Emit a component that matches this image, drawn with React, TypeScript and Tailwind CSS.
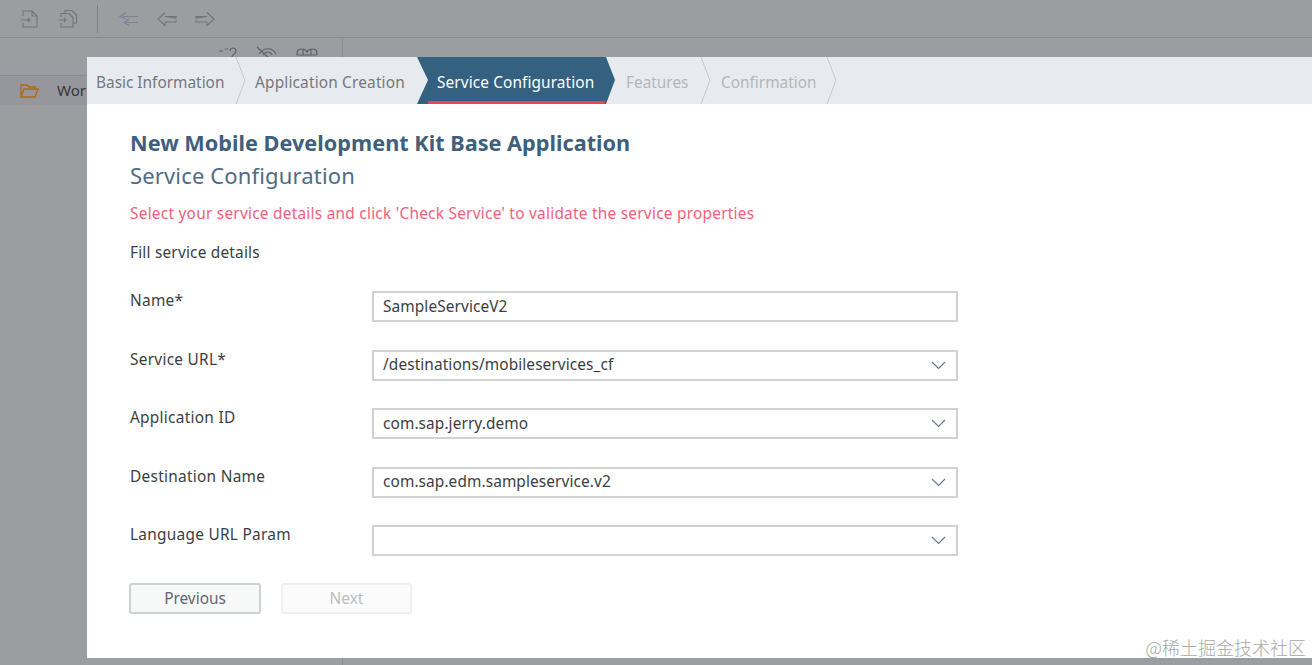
const FIELDS = [
  { label: 'Name*', value: 'SampleServiceV2', select: false },
  { label: 'Service URL*', value: '/destinations/mobileservices_cf', select: true },
  { label: 'Application ID', value: 'com.sap.jerry.demo', select: true },
  { label: 'Destination Name', value: 'com.sap.edm.sampleservice.v2', select: true },
  { label: 'Language URL Param', value: '', select: true },
];

function StepDivider() {
  return (
    <svg className="w-[11px] h-[47px] shrink-0" viewBox="0 0 11 47" fill="none" stroke="#c4c7cb" strokeWidth="1">
      <path d="M1 0 L10 23.5 L1 47" />
    </svg>
  );
}

function ToolbarIcons() {
  return (
    <div className="flex items-center h-[37px] pl-[20px] text-[#6f7479]">
      <svg className="w-[20px] h-[20px]" viewBox="0 0 20 20" fill="none" stroke="currentColor" strokeWidth="1.1">
        <path d="M3 7 V2 H12 L17 7 V18 H3 V14" />
        <path d="M12 2 V7 H17" />
        <path d="M1 11 H10 M8 9 L10 11 L8 13" />
      </svg>
      <svg className="w-[20px] h-[20px] ml-[18px]" viewBox="0 0 20 20" fill="none" stroke="currentColor" strokeWidth="1.1">
        <path d="M7 4 V1.5 H14 L18.5 6 V14 H15" />
        <path d="M3 8 V4.5 H11 L15 8.5 V18 H3 V14" />
        <path d="M0.5 11 H8 M6 9 L8 11 L6 13" />
      </svg>
      <div className="w-px h-[28px] bg-[#7d8084] ml-[19px]" />
      <svg className="w-[21px] h-[16px] ml-[20px] text-[#837f92]" viewBox="0 0 21 16" fill="none" stroke="currentColor" strokeWidth="1.1">
        <path d="M8 1.5 L2 5.5 L8 7.5 M5 5.5 H20 M11 8 L6 11.5 L11 14.5 M8 11.5 H20" />
      </svg>
      <svg className="w-[20px] h-[16px] ml-[18px]" viewBox="0 0 20 16" fill="none" stroke="currentColor" strokeWidth="1.1">
        <path d="M8 1.5 L1 8 L8 14.5 V11 H19 V9 M19 7 V5.5 H8 Z" />
      </svg>
      <svg className="w-[20px] h-[16px] ml-[18px]" viewBox="0 0 20 16" fill="none" stroke="currentColor" strokeWidth="1.1">
        <path d="M12 1.5 L19 8 L12 14.5 V11 H1 V9 M1 7 V5.5 H12 Z" />
      </svg>
    </div>
  );
}

function PaneIcons() {
  return (
    <div className="flex justify-end items-start pt-[8px] pr-[24px] h-[37px] gap-[18px] text-[#5f6368]">
      <svg className="w-[20px] h-[20px]" viewBox="0 0 20 20" fill="none" stroke="currentColor" strokeWidth="1.2">
        <path d="M1 5 H5 M7 3 H10 M12 5 C12 1 18 1 18 5 C18 8 14 8 14 11" />
      </svg>
      <svg className="w-[22px] h-[20px]" viewBox="0 0 22 20" fill="none" stroke="currentColor" strokeWidth="1.2">
        <path d="M1 1 L12 11 M3 8 C8 1 16 1 20 8 M7 9 C10 5 14 5 16 9" />
      </svg>
      <svg className="w-[22px] h-[20px]" viewBox="0 0 22 20" fill="none" stroke="currentColor" strokeWidth="1.2">
        <path d="M1 9 C1 3 3 3 6 3 C9 3 10 4 11 6 C12 4 13 3 16 3 C19 3 21 3 21 9 M1 9 H21 M7 3 V9 M15 3 V9" />
      </svg>
    </div>
  );
}

function Field({ label, value, select }: { label: string; value: string; select: boolean }) {
  return (
    <div className="flex items-start h-[31px]">
      <div className="w-[242px] pt-[1px] text-[15.4px] leading-[18px] tracking-[0.28px] text-[#3a3e42]">{label}</div>
      <div className="w-[586px] h-[31px] flex items-center justify-between border-2 border-[#d2d2d2] pl-[9px] pr-[10px] text-[15.4px] tracking-[0.1px] text-[#3a3e42] bg-white">
        <span>{value}</span>
        {select && (
          <svg className="w-[15px] h-[9px] text-[#6a7690]" viewBox="0 0 15 9" fill="none" stroke="currentColor" strokeWidth="1.2">
            <path d="M1 1 L7.5 7.5 L14 1" />
          </svg>
        )}
      </div>
    </div>
  );
}

export default function App() {
  return (
    <div className="relative w-[1312px] h-[665px] overflow-hidden bg-[#9c9da1] font-['Noto_Sans',sans-serif]">

      {/* Dimmed IDE behind the wizard */}
      <div className="border-b border-[#8b8c90]">
        <ToolbarIcons />
      </div>
      <div className="w-[343px] h-[627px] border-r border-[#8b8c90]">
        <div className="border-b border-[#8b8c90]">
          <PaneIcons />
        </div>
        <div className="flex items-center h-[29px] bg-[#95979c] pl-[19px]">
          <svg className="w-[20px] h-[16px]" viewBox="0 0 20 16" fill="none" stroke="#b0690f" strokeWidth="1.3">
            <path d="M2 14 V2 H8 L10 4 H16 V6 M2 14 L5 6 H19 L16 14 Z" />
          </svg>
          <span className="ml-[18px] w-[30px] overflow-hidden whitespace-nowrap text-[15px] text-[#34363a]">Workspace</span>
        </div>
      </div>

      {/* Wizard dialog */}
      <div className="absolute left-[87px] top-[57px] w-[1225px] h-[601px] bg-white">
        <div className="flex items-center h-[47px] pl-[9px] bg-[#e7ebf0] text-[15.4px] whitespace-nowrap">
          <span className="w-[128px] pt-[4px] text-[#74777a]">Basic Information</span>
          <div className="ml-[11px]"><StepDivider /></div>
          <span className="ml-[9px] w-[151px] pt-[4px] tracking-[0.17px] text-[#74777a]">Application Creation</span>
          <div className="relative ml-[11px] w-[198px] h-[47px] flex items-center pl-[20px] pt-[4px] tracking-[0.1px] bg-[#33617f] text-white [clip-path:polygon(0_0,189px_0,198px_23px,189px_47px,0_47px,11px_23px)]">
            Service Configuration
            <div className="absolute left-[11px] bottom-0 w-[177px] h-[3px] bg-[#f0405a]" />
          </div>
          <span className="ml-[11px] w-[64px] pt-[4px] text-[#b4b6b8]">Features</span>
          <div className="ml-[10px]"><StepDivider /></div>
          <span className="ml-[10px] w-[95px] pt-[4px] text-[#b4b6b8]">Confirmation</span>
          <div className="ml-[10px]"><StepDivider /></div>
        </div>

        <div className="pl-[43px] pt-[24px]">
          <h1 className="text-[21.7px] leading-[30px] font-bold text-[#3f5f7c]">New Mobile Development Kit Base Application</h1>
          <h2 className="mt-[2px] text-[22px] leading-[30px] tracking-[0.15px] text-[#4f6b86]">Service Configuration</h2>
          <p className="mt-[14px] text-[15.4px] leading-[20px] tracking-[0.25px] text-[#f4607a]">
            Select your service details and click 'Check Service' to validate the service properties
          </p>
          <p className="mt-[19px] text-[15.4px] leading-[20px] tracking-[0.2px] text-[#3a3e42]">Fill service details</p>

          <div className="mt-[28px] flex flex-col gap-[27.5px]">
            {FIELDS.map(field => (
              <Field key={field.label} {...field} />
            ))}
          </div>

          <div className="mt-[27px] flex gap-[20px] -ml-px text-[15.4px]">
            <button className="w-[132px] h-[31px] rounded-[3px] border-2 border-[#cfd1d1] bg-[#f7f8f8] text-[#62666a]">Previous</button>
            <button className="w-[131px] h-[31px] rounded-[3px] border-2 border-[#efefef] bg-[#fbfbfb] text-[#bcbdbe]">Next</button>
          </div>
        </div>
      </div>

      {/* Watermark */}
      <div className="absolute right-[6px] top-[636px] text-[18px] leading-[22px] text-[#a8a8a8] font-['Noto_Sans_CJK_SC',sans-serif] font-light">
        @稀土掘金技术社区
      </div>
    </div>
  );
}
